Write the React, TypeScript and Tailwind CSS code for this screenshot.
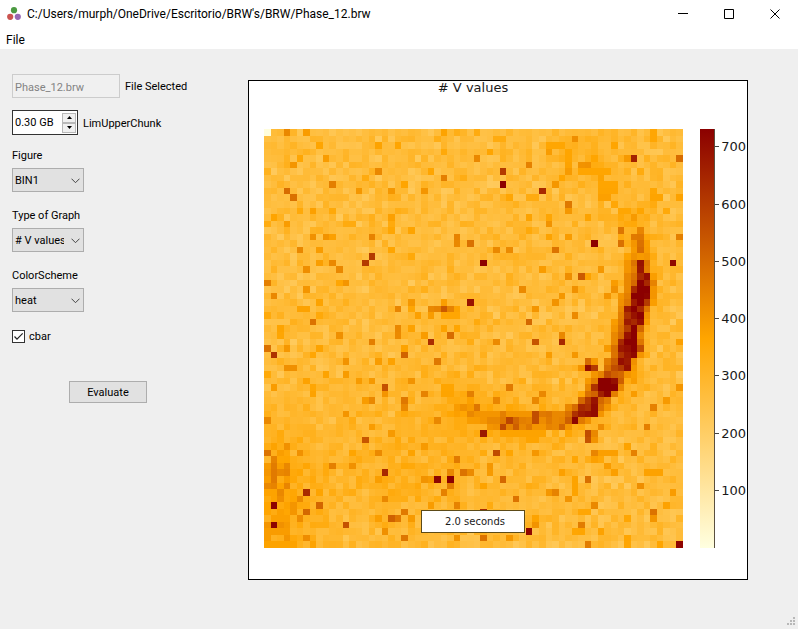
import { ReactNode, useId, useState } from "react";

const GRID = 64;
const MAX_VALUE = 730;

// Spikes per row, written as "column:value"; "a-b:value" fills a run of columns.
const SPIKES: string[] = [
  "0:8 3:430 6:385 27:370 32:340 59:360",
  "47:415 59:360 35-36:340",
  "8:365 17:370 20:365 43-45:362 53:365",
  "34:365 43:385 46:365 27:350",
  "5:360 9:385 32:430 46:365 50:365 55:390 56:655 63:490",
  "4:400 40:445 46:370 48:405 49:410 3:320",
  "17:430 25:365 36:600 46:388 48-52:365",
  "27:450 45:365 51:370 15:340",
  "10:450 21:365 36:728 44:395 51-53:365",
  "3:490 14:395 19:395 24:400 42:640 51-53:368 59:362",
  "4:480 37:360 51-52:375 59-60:368 63:372 40-41:340",
  "46:465 53:355 59:340",
  "7:375 5:350 10:350 46:395 54-55:362 61:350",
  "1:368 19:375 40:370 43:360 49:370 54:350 56:390",
  "3:385 19:345 43:405 0:335 12-13:340",
  "19:362 22:368 54:470 57:435 40:350",
  "7:410 9:405 10:375 16:440 29:440 43:370 46:385 56:460 57:465 54:340 63:450",
  "29:430 31:480 50:728 54:480 57:480 56:400 58:380",
  "5:430 8:385 19:365 35:430 37:425 44:475 57:490 56:390 58:385",
  "16:600 22:350 56:410 57:390 58:400 55:370",
  "10:430 8:380 15:600 33:725 55:400 56:475 57:690 58:460 62:710",
  "6:415 11:430 42:385 51:395 55:400 56:450 57:680 58:450",
  "46:415 48:530 49:370 55:430 56:480 57:640 58:700 59:380",
  "0:450 11:360 12:400 53:385 55:430 56:500 57:725 58:640 59:440",
  "6:400 39:425 47:410 53:410 55:430 56:640 57:730 58:730 59:400",
  "1:430 45:395 52:400 54:400 55:450 56:730 57:730 58:720 59:400",
  "22:395 27:380 31:690 8:370 44:405 54:410 55:470 56:670 57:730 58:600 59:380",
  "5-6:372 20:435 22:360 25:430 26:440 27:530 28:440 29:370 41:400 54:430 55:670 56:730 57:640 58:470",
  "23:375 25:385 27-29:362 47:425 54:450 55:620 56:690 57:728 58:410 0:345 8:350",
  "7:475 40:500 54:460 55:670 56:640 57:700 58:385 53:385 32:345",
  "2:368 20:430 22:372 27:370 29:365 53:400 54:480 55:600 56:730 57:500",
  "2:362 11:412 20:425 24:385 28:490 45:430 53:430 54:500 55:690 56:730 57:430",
  "16:450 25:630 35:425 41:545 45:640 53:430 54:640 55:730 56:730 57:470 63:375",
  "0:480 3:395 8:370 21:370 52:390 53:480 54:680 55:700 56:730 57:560",
  "1:620 21:510 7:360 43:385 47:395 53:475 54:620 55:680 56:710 57:400",
  "12:405 17:385 19:372 26:465 49:490 52:450 53:520 54:700 55:670 56:410 50:390",
  "3-4:412 48:400 49:700 50:600 52:480 53:560 54:600 55:690 56:390",
  "9:370 12:388 0:350 50:400 51:440 52:560 53:520 54:500 55:400",
  "6:372 14:388 16:392 22:405 49:390 50:450 51:730 52:730 53:700 54:520 56:385",
  "1:385 7:360 18:550 27-28:365 37:460 49:430 50:620 51:730 52:730 53:730 54:430 63:400",
  "7:372 18:400 24:440 27-28:368 31:450 42:430 49:480 50:510 51:660 52:720 53:450 56:385",
  "15:385 16:430 21:465 35:435 41:430 48:500 49:600 50:690 51:500 52:450 61:390",
  "21:430 29:385 30:410 31:390 32:470 46:430 47:490 48:640 49:620 50:705 51:470 52:400 59:445",
  "12:400 31:430 32-35:400 36:450 37-40:400 41:560 42:460 43:470 44:430 45:430 46:480 47:620 48:670 49:690 50:705 51:400",
  "0:430 26:430 32:385 33:400 34:430 35:430 36:460 37:580 38:500 39:450 40:440 41:560 42:420 43:460 44:430 45:440 46:520 47:720 48:460 49:410",
  "16:385 34:400 35:410 36:570 37:440 38:520 39:430 40:460 41:400 42:400 43:440 44:430 45:500 46:400 51:420 58:450",
  "2:345 19:390 33:680 36-42:370 49:560 50:430",
  "15:540 49:545 50:405 40-41:368",
  "3:410 24:390 1:370 55:370",
  "0:475 2:380 5:410 17:425 22:370 13:365 35:565 41:395 50:435 51-53:378 56:445",
  "1:440 29:460 3:365 47:360 50:375 51:355",
  "0:390 1:455 2:380 3:430 10:450 13:410 34:395 52:385",
  "0:400 1:460 2:430 3:440 18:640 28:430 30:475 31:425 34:390 45:375 53:378 58-60:372",
  "0:385 1:460 3:385 24:405 25:390 26:720 28:730 36:500 47:370 49:485 17:380",
  "0:430 1:440 3:435 28:455 33:370 47:370 57:415",
  "1:370 2:430 6:635 27:445 43:395 44:440 47:370 62:385",
  "2:415 5:425 18:430 38:475 46:405 19:330",
  "1:725 3:370 4:400 8:505 25:385 29:440 50:430 61:372",
  "2:375 4:400 6:500 21:460 33:640 59:475 48-49:360",
  "1-3:375 5:420 19:515 20:465 17:380 22:390 41:370 59:400 55:362",
  "0:400 1:725 2:410 3:390 12:550 41:405 48:455",
  "0-3:385 18:412 40:715 48:365 51:372 47:362",
  "0:385 3:400 6:420 21:470 29:405 33:475 37:395 55:365",
  "0-4:370 7:370 49:455 55:362 60:365 63:722",
];

// Centre line of the bright wave front: [row, column].
const FRONT: [number, number][] = [
  [13, 56], [17, 57], [21, 57], [25, 57], [29, 56], [33, 55], [36, 54],
  [39, 52], [42, 49], [44, 46], [44, 42], [44, 38], [43, 34], [42, 31],
];

const noise = (column: number, row: number) => {
  let n = Math.imul(column + 17, 374761393) + Math.imul(row + 31, 668265263);
  n = Math.imul(n ^ (n >>> 13), 1274126177);
  return ((n ^ (n >>> 16)) >>> 0) / 4294967296;
};

const near = (c: number, r: number, cc: number, rr: number, radius: number) =>
  Math.exp(-((c - cc) ** 2 + (r - rr) ** 2) / (radius * radius));

const background = (c: number, r: number) => {
  const spread = (noise(c, r) + noise(c + 90, r + 40) - 1) * 54;
  const outlier = noise(c + 200, r) > 0.95 ? 22 : 0;
  const front = Math.min(...FRONT.map(([fr, fc]) => (fr - r) ** 2 + (fc - c) ** 2));
  const raise =
    75 * Math.exp(-front / 9) +
    85 * near(c, r, 0, 57, 8) +
    42 * near(c, r, 20, 53, 8) +
    25 * near(c, r, 4, 48, 9) +
    42 * near(c, r, 49, 5, 5) +
    25 * near(c, r, 28, 43, 9) +
    20 * near(c, r, 36, 50, 8);
  return 266 + spread + outlier + raise;
};

const buildGrid = () => {
  const grid = Array.from({ length: GRID }, (_, r) =>
    Array.from({ length: GRID }, (_, c) => background(c, r)),
  );
  SPIKES.forEach((line, r) => {
    line.split(" ").forEach((item) => {
      const [span, value] = item.split(":");
      const [from, to = from] = span.split("-");
      for (let c = Number(from); c <= Number(to); c++) grid[r][c] = Number(value);
    });
  });
  return grid;
};

const STOPS = [
  [255, 255, 224],
  [255, 165, 0],
  [139, 0, 0],
];

const heat = (value: number) => {
  const t = Math.min(Math.max(value / MAX_VALUE, 0), 1) * 2;
  const i = t < 1 ? 0 : 1;
  const mix = STOPS[i].map((from, k) => Math.round(from + (STOPS[i + 1][k] - from) * (t - i)));
  return `rgb(${mix.join(",")})`;
};

const CELLS = buildGrid();
const TICKS = [100, 200, 300, 400, 500, 600, 700];

function Figure() {
  return (
    <svg
      viewBox="0 0 498 498"
      role="img"
      aria-label="Heat map of # V values"
      className="block w-full font-['DejaVu_Sans',sans-serif]"
    >
      <defs>
        <linearGradient id="heat-scale" x1="0" y1="1" x2="0" y2="0">
          <stop offset="0" stopColor="#ffffe0" />
          <stop offset="0.5" stopColor="#ffa500" />
          <stop offset="1" stopColor="#8b0000" />
        </linearGradient>
      </defs>
      <text x="224" y="11" textAnchor="middle" fontSize="13" fill="#1a1a1a">
        # V values
      </text>
      <svg x="15" y="48" width="419" height="419" viewBox="0 0 64 64" shapeRendering="crispEdges">
        {CELLS.map((row, r) =>
          row.map((value, c) => (
            <rect key={`${r}-${c}`} x={c} y={r} width="1" height="1" fill={heat(value)} />
          )),
        )}
      </svg>
      <rect x="172.5" y="429.5" width="103" height="22" fill="#fff" stroke="#5c4a17" />
      <text x="226" y="444" textAnchor="middle" fontSize="10" fill="#1a1a1a">
        2.0 seconds
      </text>
      <rect x="451" y="48" width="15" height="419" fill="url(#heat-scale)" />
      <path d="M465.5 48V467" stroke="#5a5040" />
      {TICKS.map((tick) => {
        const y = Math.round(467 - tick * 0.5725);
        return (
          <g key={tick}>
            <path d={`M466 ${y - 0.5}h4`} stroke="#444" />
            <text x="497" y={y + 4} textAnchor="end" fontSize="13" fill="#1a1a1a">
              {tick}
            </text>
          </g>
        );
      })}
    </svg>
  );
}

function Dropdown({ label, options }: { label: string; options: string[] }) {
  const id = useId();
  return (
    <div className="flex flex-col items-start gap-[2px]">
      <label htmlFor={id} className="h-[21px] leading-[22px]">
        {label}
      </label>
      <div className="relative">
        <select
          id={id}
          className="block h-6 w-[72px] appearance-none border border-[#adadad] bg-[#e1e1e1] pt-[2px] pr-[19px] pl-[2px]"
        >
          {options.map((option) => (
            <option key={option}>{option}</option>
          ))}
        </select>
        <svg
          viewBox="0 0 9 6"
          className="pointer-events-none absolute top-[10px] right-1 h-[6px] w-[9px]"
          fill="none"
          stroke="#444"
        >
          <path d="M0.5 0.7 4.5 4.7 8.5 0.7" />
        </svg>
      </div>
    </div>
  );
}

function WindowButton({ label, children }: { label: string; children: ReactNode }) {
  return (
    <button type="button" aria-label={label} className="flex h-[26px] w-[46px] items-center justify-center">
      <svg viewBox="0 0 10 10" className="size-[10px]" fill="none" stroke="#000">
        {children}
      </svg>
    </button>
  );
}

function StepButton({ label, d, onClick }: { label: string; d: string; onClick: () => void }) {
  return (
    <button
      type="button"
      aria-label={label}
      onClick={onClick}
      className="flex h-[10px] w-[14px] items-center justify-center border border-[#b8b8b8] bg-[#f0f0f0]"
    >
      <svg viewBox="0 0 5 3" className="h-[3px] w-[5px]">
        <path d={d} />
      </svg>
    </button>
  );
}

export default function App() {
  const [chunk, setChunk] = useState(0.3);
  const [cbar, setCbar] = useState(true);
  const step = (amount: number) => setChunk(Math.max(0, chunk + amount));

  return (
    <div className="flex min-h-screen flex-col bg-[#efefef] font-[Roboto,'Noto_Sans',sans-serif] text-[11px] text-black">
      <header className="bg-white">
        <div className="flex h-7 items-center pl-[7px]">
          <svg viewBox="0 0 14 14" className="size-[14px]">
            <circle cx="7" cy="3.2" r="3.1" fill="#4c9a41" />
            <circle cx="3.2" cy="9.8" r="3.1" fill="#cb5450" />
            <circle cx="10.8" cy="9.8" r="3.1" fill="#9768b4" />
          </svg>
          <h1 className="ml-[6px] flex-1 text-xs">
            C:/Users/murph/OneDrive/Escritorio/BRW's/BRW/Phase_12.brw
          </h1>
          <WindowButton label="Minimize">
            <path d="M0 4.5h10" />
          </WindowButton>
          <WindowButton label="Maximize">
            <path d="M0.5 0.5h9v9h-9z" />
          </WindowButton>
          <WindowButton label="Close">
            <path d="M0.5 0.5l9 9M9.5 0.5l-9 9" />
          </WindowButton>
        </div>
        <nav className="flex h-[21px] items-end pb-px pl-[6px]">
          <button type="button" className="text-xs leading-4">
            File
          </button>
        </nav>
      </header>

      <main className="flex flex-1 items-start">
        <form className="w-[248px] shrink-0 pt-[25px] pl-3" onSubmit={(e) => e.preventDefault()}>
          <div className="flex items-center gap-[5px]">
            <input
              id="file"
              disabled
              value="Phase_12.brw"
              className="h-6 w-[108px] border border-[#cccccc] bg-[#f0f0f0] px-[2px] pt-[2px] text-[#838383]"
            />
            <label htmlFor="file" className="pt-[3px]">
              File Selected
            </label>
          </div>

          <div className="mt-3 flex items-center gap-[5px]">
            <div className="flex h-[25px] w-[66px] items-center border border-[#333] bg-white pr-[1px]">
              <input
                id="chunk"
                readOnly
                value={`${chunk.toFixed(2)} GB`}
                className="w-0 flex-1 bg-transparent pt-[2px] pl-[2px]"
              />
              <div className="flex flex-col">
                <StepButton label="Increase" d="M0 3 2.5 0 5 3z" onClick={() => step(0.01)} />
                <StepButton label="Decrease" d="M0 0 2.5 3 5 0z" onClick={() => step(-0.01)} />
              </div>
            </div>
            <label htmlFor="chunk" className="pt-[3px]">
              LimUpperChunk
            </label>
          </div>

          <div className="mt-[10px] flex flex-col gap-[13px]">
            <Dropdown label="Figure" options={["BIN1"]} />
            <Dropdown label="Type of Graph" options={["# V values"]} />
            <Dropdown label="ColorScheme" options={["heat"]} />
          </div>

          <label className="mt-4 flex h-4 items-center gap-1">
            <span className="relative size-[13px]">
              <input
                type="checkbox"
                checked={cbar}
                onChange={() => setCbar(!cbar)}
                className="block size-[13px] appearance-none border border-[#333] bg-white"
              />
              {cbar && (
                <svg
                  viewBox="0 0 13 13"
                  className="pointer-events-none absolute inset-0"
                  fill="none"
                  stroke="#222"
                  strokeWidth="1.2"
                >
                  <path d="M2.5 6.5 5 9.2 10.7 3.4" />
                </svg>
              )}
            </span>
            <span className="pt-[3px]">cbar</span>
          </label>

          <button
            type="submit"
            className="mt-[37px] ml-[57px] block h-[22px] w-[78px] border border-[#adadad] bg-[#e1e1e1] pt-[2px]"
          >
            Evaluate
          </button>
        </form>

        <section className="mt-[31px] mr-[50px] flex-1 border border-black bg-white">
          <Figure />
        </section>
      </main>

      <footer className="flex h-3 justify-end pr-[3px]">
        <svg viewBox="0 0 8 8" className="size-2" fill="#b8b8b8">
          <path d="M6 0h2v2h-2zM3 3h2v2h-2zM6 3h2v2h-2zM0 6h2v2h-2zM3 6h2v2h-2zM6 6h2v2h-2z" />
        </svg>
      </footer>
    </div>
  );
}
